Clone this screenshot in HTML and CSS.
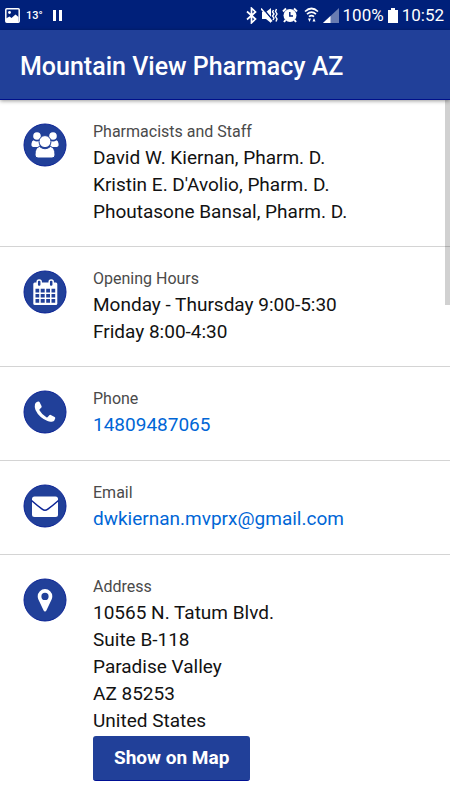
FILE: index.html
```html
<!DOCTYPE html>
<html lang="en">
<head>
<meta charset="utf-8">
<meta name="viewport" content="width=device-width, initial-scale=1">
<title>Mountain View Pharmacy AZ</title>
<link rel="stylesheet" href="styles.css">
</head>
<body>
<div class="status">
  <svg width="15" height="15" viewBox="0 0 15 15"><rect x=".8" y=".8" width="13.4" height="13.4" rx="1" fill="none" stroke="#fff" stroke-width="1.5"/><circle cx="4.5" cy="4.500" r="1.400" fill="#fff"/><path d="M1 10.500l3.500-2 2 1.500 4-3.500 3 2.500v5H1z" fill="#fff"/></svg>
  <span class="temp">13°</span>
  <svg class="pause" width="10" height="11" viewBox="0 0 10 11"><path d="M0 0h3v11H0zM6 0h3v11H6z" fill="#fff"/></svg>
  <span class="spacer"></span>
  <svg width="11" height="17" viewBox="0 0 11 17"><path d="M1 4.500l8.500 7.500-4 3.800V1.200l4 3.800L1 12.500" fill="none" stroke="#fff" stroke-width="1.700"/></svg>
  <svg width="17" height="17" viewBox="0 0 17 17"><path d="M1 5h4l5-4v15l-5-4H1z" fill="#fff"/><path d="M1.500 1l11 13" stroke="#00207a" stroke-width="1.500"/><path d="M0 1.500l11 13" stroke="#fff" stroke-width="1.500"/><path d="M12.500 3l-1 2 1.500 2-1.500 2 1.500 2-1 2M15.500 2l-1 2.500L16 7l-1.500 2.500L16 12l-1 2.500" fill="none" stroke="#fff" stroke-width="1.400"/></svg>
  <svg width="16" height="16" viewBox="0 0 16 16"><circle cx="8" cy="8.500" r="6.500" fill="#fff"/><path d="M1 4.500l3-3M12 1.500l3 3M3.500 13l-1.500 2M12.500 13l1.500 2" stroke="#fff" stroke-width="2"/><path d="M7.800 5v4H11" fill="none" stroke="#00207a" stroke-width="1.400"/></svg>
  <svg class="wifi" width="15" height="16" viewBox="0 0 15 16"><path d="M1 4.500q6.500-6 13 0M3 7.200q4.500-4 9 0M5 9.700q2.500-2.200 5 0" fill="none" stroke="#fff" stroke-width="1.700"/><path d="M4 11.500h3L5.500 15zM8.500 14.500L10 11l1.500 3.500z" fill="#fff"/></svg>
  <svg width="16" height="15" viewBox="0 0 16 15"><path d="M0 15L16 0v15z" fill="#687bb1"/><path d="M0 15l7.500-7v7z" fill="#fff"/></svg>
  <span class="percent">100%</span>
  <svg width="10" height="15" viewBox="0 0 10 15"><path d="M3 0h4v2h3v13H0V2h3z" fill="#fff"/></svg>
  <span class="time">10:52</span>
</div>
<header class="bar"><h1>Mountain View Pharmacy AZ</h1></header>
<main class="content">
  <section class="row">
    <svg class="icon" viewBox="0 0 44 44"><circle class="disc" cx="22" cy="22" r="21"/><g class="glyph"><circle cx="14" cy="13" r="3.800"/><circle cx="30" cy="13" r="3.800"/><path d="M10.500 17.200q3.500 2.200 6 .3v6.500H10q-2-.5-1.500-3.500.4-3 2-3.300zM33.500 17.200q-3.500 2.200-6 .3v6.500H34q2-.5 1.500-3.500-.4-3-2-3.300z"/><path class="cut" d="M16.500 23.500Q22 28 27.500 23.500q4.500 1 4.500 8.500 0 3-3 3H15q-3 0-3-3 0-7.500 4.500-8.500z"/><circle class="cut" cx="22" cy="18.600" r="6"/></g></svg>
    <div class="info">
      <h2>Pharmacists and Staff</h2>
      <p>David W. Kiernan, Pharm. D.</p>
      <p>Kristin E. D'Avolio, Pharm. D.</p>
      <p>Phoutasone Bansal, Pharm. D.</p>
    </div>
  </section>
  <section class="row">
    <svg class="icon" viewBox="0 0 44 44"><circle class="disc" cx="22" cy="22" r="21"/><rect class="glyph" x="10.300" y="12.500" width="24" height="22.500" rx="1.500"/><path class="holes" d="M12.500 18.800h3.700v3.800h-3.700zM17.700 18.800h4v3.800h-4zM23.200 18.800h3.800v3.800h-3.800zM28.500 18.800h3.700v3.800h-3.700zM12.500 24h3.700v3.600h-3.700zM17.700 24h4v3.600h-4zM23.200 24h3.800v3.600h-3.800zM28.500 24h3.700v3.600h-3.700zM12.500 29h3.700v3.700h-3.700zM17.700 29h4v3.700h-4zM23.200 29h3.800v3.700h-3.800zM28.500 29h3.700v3.700h-3.700z"/><g class="rings"><rect x="14.200" y="10" width="4" height="6.500" rx="1.800"/><rect x="26.200" y="10" width="4" height="6.500" rx="1.800"/></g></svg>
    <div class="info">
      <h2>Opening Hours</h2>
      <p>Monday - Thursday 9:00-5:30</p>
      <p>Friday 8:00-4:30</p>
    </div>
  </section>
  <section class="row">
    <svg class="icon" viewBox="0 0 44 44"><circle class="disc" cx="22" cy="22" r="21"/><path class="glyph" d="M12 14q.5-2 3-2.500 1-.3 1.500.6l2 4q.5 1-.3 1.700l-1.600 1.500q-.5.600 0 1.300 2.500 4.300 6.800 6.700.8.500 1.400-.2l1.500-1.900q.6-.7 1.500-.2l3.800 2q.8.500.6 1.400-.6 2.500-2.500 3-2.400.9-5.200-.4-8.500-3.500-12-11-1.200-3.500-.5-6z"/></svg>
    <div class="info">
      <h2>Phone</h2>
      <p><a href="tel:14809487065">14809487065</a></p>
    </div>
  </section>
  <section class="row">
    <svg class="icon" viewBox="0 0 44 44"><circle class="disc" cx="22" cy="22" r="21"/><rect class="glyph" x="9" y="12.500" width="26" height="20.500" rx="2.500"/><path class="flap" d="M8.500 16.500q5.500 4.800 10.700 8.700 2.800 2.200 5.600 0 5.200-3.900 10.700-8.700"/></svg>
    <div class="info">
      <h2>Email</h2>
      <p><a href="mailto:dwkiernan.mvprx@gmail.com">dwkiernan.mvprx@gmail.com</a></p>
    </div>
  </section>
  <section class="row">
    <svg class="icon" viewBox="0 0 44 44"><circle class="disc" cx="22" cy="22" r="21"/><path class="glyph" fill-rule="evenodd" d="M22 11a7.300 7.300 0 0 1 7.300 7.300q0 1.500-.6 3l-5.200 11q-.5 1.200-1.500 1.200t-1.500-1.200l-5.200-11q-.6-1.500-.6-3A7.300 7.300 0 0 1 22 11zm0 3.800a3.600 3.600 0 1 0 0 7.200 3.600 3.600 0 0 0 0-7.200z"/></svg>
    <div class="info">
      <h2>Address</h2>
      <p>10565 N. Tatum Blvd.</p>
      <p>Suite B-118</p>
      <p>Paradise Valley</p>
      <p>AZ 85253</p>
      <p>United States</p>
      <button type="button" class="map">Show on Map</button>
    </div>
  </section>
  <div class="thumb"></div>
</main>
</body>
</html>
```
FILE: styles.css
```css
* { box-sizing: border-box; }
body { margin: 0; background: #fff; color: #121212; font-family: Roboto, sans-serif; }
h1, h2, p { margin: 0; font-weight: 400; }
svg { flex: none; }

.status { display: flex; align-items: center; gap: 4px; height: 30px; padding: 0 6px 0 5px; background: #00207a; color: #fff; }
.spacer { flex: 1; }
.temp { margin-left: 2px; font-size: 11px; font-weight: 500; }
.pause { margin-left: 6px; }
.wifi { margin-left: 2px; }
.percent, .time { font-size: 17px; line-height: 30px; }

.bar { position: relative; z-index: 1; padding: 21px 20px 16px; background: #214099; border-bottom: 1px solid #00108a; box-shadow: 0 1px 4px rgba(0, 0, 0, .4); color: #fff; }
.bar h1 { font-size: 25px; line-height: 32px; font-weight: 500; }

.content { position: relative; }
.row { display: flex; gap: 26px; align-items: flex-start; padding: 0 23px; border-bottom: 1px solid #d4d4d4; }
.row:last-of-type { border-bottom: 0; }
.icon { width: 44px; height: 44px; margin: 23px 0 26px; }
.disc { fill: #214099; stroke: #0c2496; stroke-width: 1; }
.glyph { fill: #fff; }
.cut { stroke: #214099; stroke-width: 1; }
.holes { fill: #214099; }
.rings { fill: #214099; stroke: #fff; stroke-width: 1.5; }
.flap { fill: none; stroke: #0c2496; stroke-width: 1.5; }

.info { padding: 20px 0 21px; }
.info h2 { font-size: 16px; line-height: 24px; color: #4a4a4a; }
.info p { font-size: 19px; line-height: 27px; }
.info a { color: #0066d6; text-decoration: none; }
.map { display: block; margin-top: 2px; padding: 0 21px; height: 45px; border: 0; border-bottom: 1px solid #001094; border-radius: 3px; background: #214099; color: #fff; font: 700 19px/44px Roboto, sans-serif; cursor: pointer; }

.thumb { position: absolute; top: 0; right: 0; width: 5px; height: 205px; background: rgba(0, 0, 0, .18); }
```
